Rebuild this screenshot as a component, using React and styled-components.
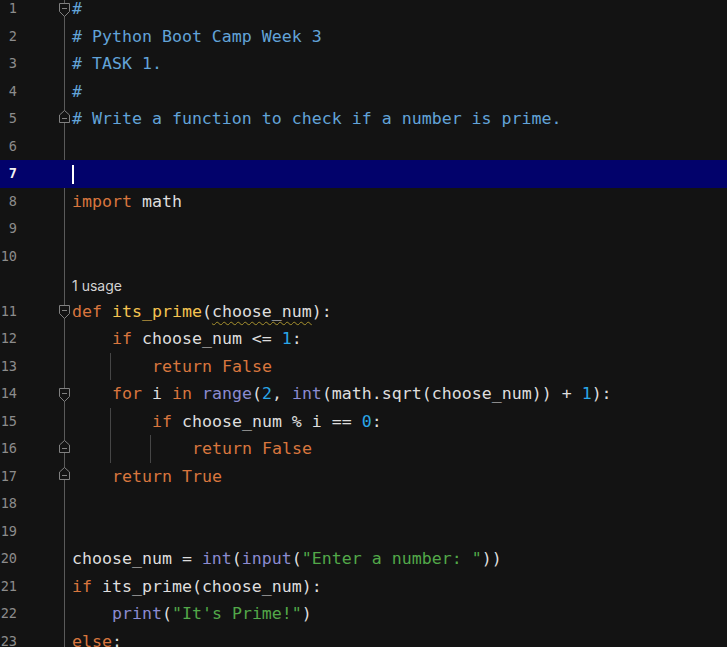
import React from 'react';
import styled, { createGlobalStyle } from 'styled-components';

const BG = '#131313';

const GlobalStyle = createGlobalStyle({
  'html, body': {
    margin: 0,
    padding: 0,
    background: BG,
    overflow: 'hidden',
  },
});

const Editor = styled('div')({
  marginTop: -5,
  width: 727,
  fontFamily: '"DejaVu Sans Mono", "Liberation Mono", monospace',
  fontSize: '16.6px',
  color: '#dcdcdc',
});

const Row = styled('div')(({ $current }) => ({
  display: 'flex',
  alignItems: 'stretch',
  height: '27.5px',
  lineHeight: '27.5px',
  background: $current ? '#02026b' : 'transparent',
}));

const LineNo = styled('div')(({ $current }) => ({
  width: 17,
  marginRight: 40,
  textAlign: 'right',
  fontSize: '13.6px',
  color: $current ? '#f2f2f2' : '#8c8c8c',
  fontWeight: $current ? 'bold' : 'normal',
}));

const FoldCell = styled('div')(({ $noLine }) => ({
  position: 'relative',
  width: 15,
  display: 'flex',
  justifyContent: 'center',
  alignItems: 'center',
  '&::before': {
    content: '""',
    display: $noLine ? 'none' : 'block',
    position: 'absolute',
    left: 7,
    top: 0,
    bottom: 0,
    width: 1,
    background: '#5a5a5a',
  },
}));

const FoldIcon = styled('svg')(({ $end }) => ({
  position: 'relative',
  marginTop: $end ? -5 : 2,
  fill: BG,
  stroke: '#808080',
  strokeWidth: 1,
}));

const Code = styled('div')({
  display: 'flex',
  alignItems: 'stretch',
  whiteSpace: 'pre',
});

const Indent = styled('div')(({ $guide }) => ({
  position: 'relative',
  width: 40,
  flexShrink: 0,
  '&::after': {
    content: '""',
    display: $guide ? 'block' : 'none',
    position: 'absolute',
    right: 1,
    top: 0,
    bottom: 0,
    width: 1,
    background: '#464646',
  },
}));

const COLORS = {
  c: '#62a3d8',
  k: '#d8763e',
  f: '#f5c451',
  n: '#2aa6e8',
  b: '#8b8bd0',
  s: '#52a849',
  t: '#dedede',
};

const Tok = styled('span')(({ $kind, $warn }) => ({
  color: COLORS[$kind],
  textDecorationLine: $warn ? 'underline' : 'none',
  textDecorationStyle: 'wavy',
  textDecorationColor: '#a8922e',
  textDecorationThickness: '1px',
  textUnderlineOffset: '4px',
}));

const Caret = styled('span')({
  alignSelf: 'center',
  width: 2,
  height: 19,
  marginTop: 2,
  background: '#ffffff',
});

const Usage = styled('div')({
  fontFamily: 'Inter, "Noto Sans", sans-serif',
  fontSize: '14px',
  color: '#d2d2d2',
  paddingTop: 2,
});

const Fold = ({ end }) =>
  end ? (
    <FoldIcon $end width="11" height="13" viewBox="0 0 11 13">
      <path d="M0.5 12.5H10.5V5L5.5 0.5L0.5 5Z" />
      <path d="M3 8.5H8" />
    </FoldIcon>
  ) : (
    <FoldIcon width="11" height="14" viewBox="0 0 11 14">
      <path d="M0.5 0.5H10.5V8.5L5.5 13.5L0.5 8.5Z" />
      <path d="M3 5.5H8" />
    </FoldIcon>
  );

const lines = [
  { n: 1, fold: 'start', toks: [['c', '#']] },
  { n: 2, toks: [['c', '# Python Boot Camp Week 3']] },
  { n: 3, toks: [['c', '# TASK 1.']] },
  { n: 4, toks: [['c', '#']] },
  { n: 5, fold: 'end', toks: [['c', '# Write a function to check if a number is prime.']] },
  { n: 6, toks: [] },
  { n: 7, current: true, toks: [] },
  { n: 8, toks: [['k', 'import'], ['t', ' math']] },
  { n: 9, toks: [] },
  { n: 10, toks: [] },
  { usage: '1 usage' },
  {
    n: 11,
    fold: 'start',
    toks: [['k', 'def'], ['t', ' '], ['f', 'its_prime'], ['t', '('], ['t', 'choose_num', true], ['t', '):']],
  },
  { n: 12, indent: [false], toks: [['k', 'if'], ['t', ' choose_num <= '], ['n', '1'], ['t', ':']] },
  { n: 13, indent: [true, false], toks: [['k', 'return False']] },
  {
    n: 14,
    fold: 'start',
    indent: [false],
    toks: [
      ['k', 'for'], ['t', ' i '], ['k', 'in'], ['t', ' '], ['b', 'range'], ['t', '('], ['n', '2'],
      ['t', ', '], ['b', 'int'], ['t', '(math.sqrt(choose_num)) + '], ['n', '1'], ['t', '):'],
    ],
  },
  { n: 15, indent: [true, false], toks: [['k', 'if'], ['t', ' choose_num % i == '], ['n', '0'], ['t', ':']] },
  { n: 16, fold: 'end', indent: [true, true, false], toks: [['k', 'return False']] },
  { n: 17, fold: 'end', indent: [false], toks: [['k', 'return True']] },
  { n: 18, toks: [] },
  { n: 19, toks: [] },
  {
    n: 20,
    toks: [['t', 'choose_num = '], ['b', 'int'], ['t', '('], ['b', 'input'], ['t', '('], ['s', '"Enter a number: "'], ['t', '))']],
  },
  { n: 21, toks: [['k', 'if'], ['t', ' its_prime(choose_num):']] },
  { n: 22, indent: [false], toks: [['b', 'print'], ['t', '('], ['s', '"It\'s Prime!"'], ['t', ')']] },
  { n: 23, toks: [['k', 'else'], ['t', ':']] },
];

const App = () => (
  <>
    <GlobalStyle />
    <Editor>
      {lines.map((line, i) =>
        line.usage ? (
          <Row key={i}>
            <LineNo />
            <FoldCell />
            <Usage>{line.usage}</Usage>
          </Row>
        ) : (
          <Row key={i} $current={line.current}>
            <LineNo $current={line.current}>{line.n}</LineNo>
            <FoldCell $noLine={line.current}>{line.fold && <Fold end={line.fold === 'end'} />}</FoldCell>
            <Code>
              {(line.indent || []).map((g, j) => (
                <Indent key={j} $guide={g} />
              ))}
              {line.current && <Caret />}
              {line.toks.map(([kind, text, warn], j) => (
                <Tok key={j} $kind={kind} $warn={warn}>
                  {text}
                </Tok>
              ))}
            </Code>
          </Row>
        )
      )}
    </Editor>
  </>
);

export default App;
